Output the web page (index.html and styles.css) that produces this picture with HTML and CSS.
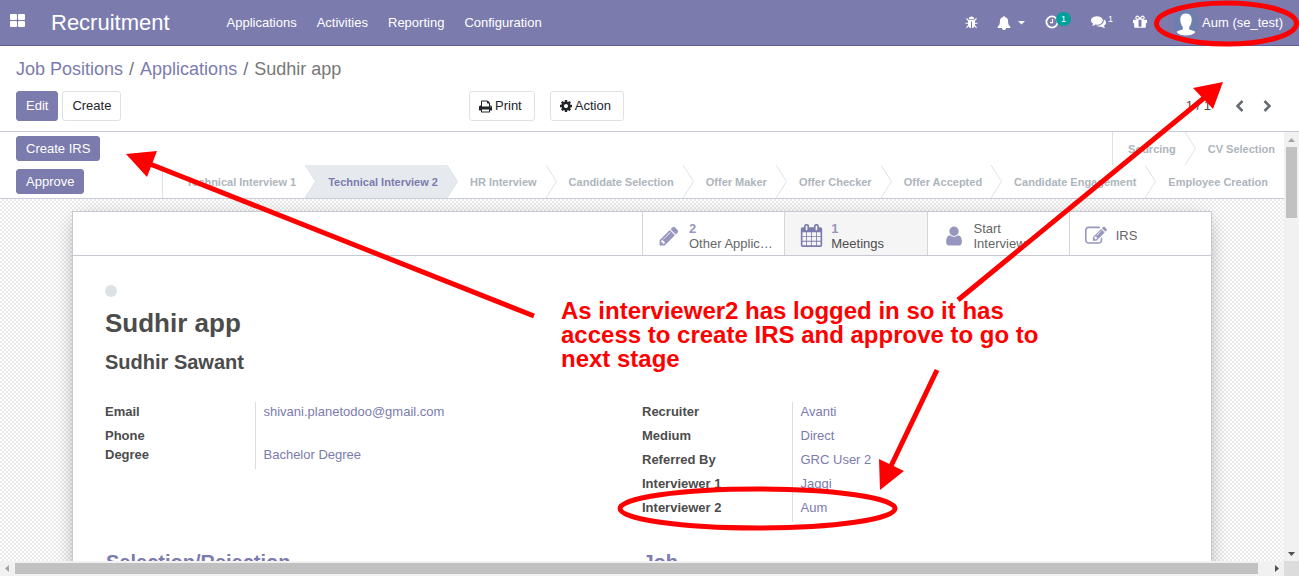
FILE: index.html
```html
<!DOCTYPE html>
<html lang="en">
<head>
<meta charset="utf-8">
<title>Sudhir app - Recruitment</title>
<link rel="stylesheet" href="styles.css">
</head>
<body>
<header class="navbar">
  <button class="apps" aria-label="Apps"><svg width="15" height="13" viewBox="0 0 15 13" fill="#fff"><rect width="7" height="6" rx="1"/><rect x="8" width="7" height="6" rx="1"/><rect y="7" width="7" height="6" rx="1"/><rect x="8" y="7" width="7" height="6" rx="1"/></svg></button>
  <a class="brand" href="#">Recruitment</a>
  <nav class="menu"><a href="#">Applications</a><a href="#">Activities</a><a href="#">Reporting</a><a href="#">Configuration</a></nav>
  <div class="systray">
    <button class="tray bug" aria-label="Debug"><svg width="13" height="13" viewBox="0 0 13 13"><path d="M3.8 3.2a2.7 2.7 0 0 1 5.4 0z" fill="#fff"/><path d="M3 4h7v5a3.5 3.2 0 0 1-3 3V5.500H6V12A3.500 3.200 0 0 1 3 9z" fill="#fff"/><path d="M1.500 2.500 3.500 4.500M11.500 2.500 9.500 4.500M.500 7.200H3M10 7.200h2.500M3.300 9.500 1.500 11.800M9.700 9.500l1.800 2.300" stroke="#fff" stroke-width="1.100"/></svg></button>
    <button class="tray bell" aria-label="Notifications"><svg width="14" height="14" viewBox="0 0 1792 1792" fill="#fff"><path d="M1728 1408q0 52-38 90t-90 38h-448q0 106-75 181t-181 75-181-75-75-181h-448q-52 0-90-38t-38-90q50-42 91-88t85-119.500 74.500-158.500 50-206 19.500-260q0-152 117-282.500t307-158.500q-8-19-8-39 0-40 28-68t68-28 68 28 28 68q0 20-8 39 190 28 307 158.500t117 282.500q0 139 19.500 260t50 206 74.500 158.500 85 119.500 91 88z"/></svg><svg width="7" height="4" viewBox="0 0 7 4" fill="#fff"><path d="M0 0h7L3.500 3.500z"/></svg></button>
    <button class="tray clock" aria-label="Activities"><svg width="14" height="14" viewBox="0 0 14 14" fill="none" stroke="#fff"><circle cx="7" cy="7" r="5.600" stroke-width="1.800"/><path d="M7.500 4v3.600H5" stroke-width="1.200"/></svg><span class="badge">1</span></button>
    <button class="tray chat" aria-label="Messages"><svg width="15" height="15" viewBox="0 0 1792 1792" fill="#fff"><path d="M1408 768q0 139-94 257t-256.500 186.500-353.500 68.500q-86 0-176-16-124 88-278 128-36 9-86 16h-3q-11 0-20.500-8t-11.500-21q-1-3-1-6.500t.5-6.500 2-6l2.500-5 3.500-5.500 4-5 4.500-5 4-4.500q5-6 23-25t26-29.500 22.500-29 25-38.500 20.500-44q-124-72-195-177t-71-224q0-139 94-257t256.500-186.500 353.500-68.500 353.500 68.500 256.500 186.500 94 257zm384 256q0 120-71 224.500t-195 176.500q10 24 20.500 44t25 38.500 22.500 29 26 29.500 23 25q1 1 4 4.500t4.500 5 4 5 3.500 5.500l2.500 5 2 6 .5 6.500-1 6.500q-3 14-13 22t-22 7q-50-7-86-16-154-40-278-128-90 16-176 16-271 0-472-132 58 4 88 4 161 0 309-45t264-129q125-92 192-212t67-254q0-77-23-152 129 71 204 178t75 230z"/></svg><span class="count">1</span></button>
    <button class="tray gift" aria-label="Rewards"><svg width="14" height="14" viewBox="128 128 1536 1536" fill="#fff"><path d="M1056 1356v-716h-320v716q0 25 18 38.500t46 13.500h192q28 0 46-13.500t18-38.500zm-456-844h195l-126-161q-26-31-69-31-40 0-68 28t-28 68 28 68 68 28zm688-96q0-40-28-68t-68-28q-43 0-69 31l-125 161h194q40 0 68-28t28-68zm376 256v320q0 14-9 23t-23 9h-96v416q0 40-28 68t-68 28h-1088q-40 0-68-28t-28-68v-416h-96q-14 0-23-9t-9-23v-320q0-14 9-23t23-9h440q-93 0-158.500-65.500t-65.500-158.500 65.500-158.500 158.500-65.500q107 0 168 77l128 165 128-165q61-77 168-77 93 0 158.500 65.500t65.500 158.500-65.500 158.500-158.500 65.500h440q14 0 23 9t9 23z"/></svg></button>
    <button class="tray user"><svg width="26" height="26" viewBox="0 0 26 26"><defs><clipPath id="face"><circle cx="13" cy="13" r="13"/></clipPath></defs><g clip-path="url(#face)"><rect width="26" height="26" fill="#6c7fae"/><path d="M13 3.500c4 0 6 2.800 5.700 6.800-.2 3.500-1.600 5.500-2.500 6.700v2.400c2 .8 5.500 1.200 6.300 2.600.6 2-5 3.500-9.500 3.500s-10.100-1.500-9.500-3.500c.8-1.400 4.300-1.800 6.300-2.600V17c-.9-1.200-2.300-3.200-2.500-6.700C7 6.300 9 3.500 13 3.500z" fill="#fff"/></g></svg><span>Aum (se_test)</span></button>
  </div>
</header>

<section class="control">
  <ol class="crumbs"><li><a href="#">Job Positions</a></li><li><a href="#">Applications</a></li><li>Sudhir app</li></ol>
  <div class="toolbar">
    <div class="tools"><button class="btn primary">Edit</button><button class="btn">Create</button></div>
    <div class="tools center"><button class="btn"><svg width="13" height="13" viewBox="64 64 1664 1664" fill="#212529"><path d="M448 1536h896v-256h-896v256zm0-640h896v-384h-160q-40 0-68-28t-28-68v-160h-640v640zm1152 64q0-26-19-45t-45-19-45 19-19 45 19 45 45 19 45-19 19-45zm128 0v416q0 13-9.500 22.500t-22.500 9.500h-224v160q0 40-28 68t-68 28h-960q-40 0-68-28t-28-68v-160h-224q-13 0-22.500-9.500t-9.500-22.500v-416q0-79 56.500-135.500t135.500-56.500h64v-544q0-40 28-68t68-28h672q40 0 88 20t76 48l152 152q28 28 48 76t20 88v256h64q79 0 135.500 56.500t56.500 135.500z"/></svg>Print</button><button class="btn"><svg width="12" height="12" viewBox="128 128 1536 1536" fill="#212529"><path d="M1152 896q0-106-75-181t-181-75-181 75-75 181 75 181 181 75 181-75 75-181zm512-109v222q0 12-8 23t-20 13l-185 28q-19 54-39 91 35 50 107 138 10 12 10 25t-9 23q-27 37-99 108t-94 71q-12 0-26-9l-138-108q-44 23-91 38-16 136-29 186-7 28-36 28h-222q-14 0-24.500-8.500t-11.500-21.500l-28-184q-49-16-90-37l-141 107q-10 9-25 9-14 0-25-11-126-114-165-168-7-10-7-23 0-12 8-23 15-21 51-66.500t54-70.500q-27-50-41-99l-183-27q-13-2-21-12.500t-8-23.500v-222q0-12 8-23t19-13l186-28q14-46 39-92-40-57-107-138-10-12-10-24 0-10 9-23 26-36 98.500-107.500t94.500-71.500q13 0 26 10l138 107q44-23 91-38 16-136 29-186 7-28 36-28h222q14 0 24.500 8.500t11.500 21.500l28 184q49 16 90 37l142-107q9-9 24-9 13 0 25 10 129 119 165 170 7 8 7 22 0 12-8 23-15 21-51 66.500t-54 70.500q26 50 41 98l183 28q13 2 21 12.500t8 23.500z"/></svg>Action</button></div>
    <div class="pager"><span>1 / 1</span><button aria-label="Previous"><svg width="9" height="12" viewBox="0 0 9 12"><path d="M7.500 1 2.500 6l5 5" fill="none" stroke="#666b72" stroke-width="2.500"/></svg></button><button aria-label="Next"><svg width="9" height="12" viewBox="0 0 9 12"><path d="m1.500 1 5 5-5 5" fill="none" stroke="#666b72" stroke-width="2.500"/></svg></button></div>
  </div>
</section>

<main class="viewport">
  <div class="view">
    <div class="statusbar">
      <div class="actions"><button class="btn primary small">Create IRS</button><button class="btn primary small">Approve</button></div>
      <div class="stages">
        <div class="stage-row first"><button class="stage">Sourcing<svg class="tip" viewBox="0 0 11 33"><path d="M0 0 10.500 16.500 0 33"/></svg></button><button class="stage">CV Selection</button></div>
        <div class="stage-row second"><button class="stage">Technical Interview 1<svg class="tip" viewBox="0 0 11 33"><path d="M0 0 10.500 16.500 0 33"/></svg></button><button class="stage current" aria-current="step">Technical Interview 2<svg class="tip" viewBox="0 0 11 33"><path d="M0 0 10.500 16.500 0 33"/></svg></button><button class="stage">HR Interview<svg class="tip" viewBox="0 0 11 33"><path d="M0 0 10.500 16.500 0 33"/></svg></button><button class="stage">Candidate Selection<svg class="tip" viewBox="0 0 11 33"><path d="M0 0 10.500 16.500 0 33"/></svg></button><button class="stage">Offer Maker<svg class="tip" viewBox="0 0 11 33"><path d="M0 0 10.500 16.500 0 33"/></svg></button><button class="stage">Offer Checker<svg class="tip" viewBox="0 0 11 33"><path d="M0 0 10.500 16.500 0 33"/></svg></button><button class="stage">Offer Accepted<svg class="tip" viewBox="0 0 11 33"><path d="M0 0 10.500 16.500 0 33"/></svg></button><button class="stage">Candidate Engagement<svg class="tip" viewBox="0 0 11 33"><path d="M0 0 10.500 16.500 0 33"/></svg></button><button class="stage">Employee Creation</button></div>
      </div>
    </div>
    <div class="backdrop">
      <article class="sheet">
        <div class="stats">
          <button class="stat"><svg width="22" height="22" viewBox="0 0 1792 1792"><path d="M491 1536l91-91-235-235-91 91v107h128v128h107zm523-928q0-22-22-22-10 0-17 7l-542 542q-7 7-7 17 0 22 22 22 10 0 17-7l542-542q7-7 7-17zm-54-192l416 416-832 832h-416v-416zm683 96q0 53-37 90l-166 166-416-416 166-165q36-38 90-38 53 0 91 38l235 234q37 39 37 91z"/></svg><span class="stat-text"><b>2</b><span>Other Applications</span></span></button>
          <button class="stat hover"><svg width="23" height="23" viewBox="0 0 1792 1792"><path d="M192 1664h288v-288h-288v288zm352 0h320v-288h-320v288zm-352-352h288v-320h-288v320zm352 0h320v-320h-320v320zm-352-384h288v-288h-288v288zm736 736h320v-288h-320v288zm-384-736h320v-288h-320v288zm768 736h288v-288h-288v288zm-384-352h320v-320h-320v320zm-352-864v-288q0-13-9.500-22.500t-22.500-9.500h-64q-13 0-22.500 9.500t-9.500 22.500v288q0 13 9.500 22.500t22.500 9.500h64q13 0 22.500-9.500t9.500-22.500zm736 864h288v-320h-288v320zm-384-384h320v-288h-320v288zm384 0h288v-288h-288v288zm32-480v-288q0-13-9.500-22.500t-22.500-9.500h-64q-13 0-22.500 9.500t-9.500 22.500v288q0 13 9.500 22.500t22.500 9.500h64q13 0 22.500-9.500t9.500-22.500zm384-64v1280q0 52-38 90t-90 38h-1408q-52 0-90-38t-38-90v-1280q0-52 38-90t90-38h128v-96q0-66 47-113t113-47h64q66 0 113 47t47 113v96h384v-96q0-66 47-113t113-47h64q66 0 113 47t47 113v96h128q52 0 90 38t38 90z"/></svg><span class="stat-text"><b>1</b><span>Meetings</span></span></button>
          <button class="stat"><svg width="22" height="22" viewBox="0 0 1792 1792"><path d="M1536 1399q0 109-62.500 187t-150.500 78h-854q-88 0-150.500-78t-62.500-187q0-85 8.500-160.500t31.500-152 58.500-131 94-89 134.500-34.500q131 128 313 128t313-128q76 0 134.500 34.500t94 89 58.500 131 31.500 152 8.500 160.500zm-256-887q0 159-112.500 271.500t-271.500 112.500-271.500-112.500-112.500-271.500 112.500-271.500 271.500-112.500 271.500 112.500 112.500 271.500z"/></svg><span class="stat-text"><span>Start</span><span>Interview</span></span></button>
          <button class="stat"><svg width="22" height="22" viewBox="0 0 1792 1792"><path d="M888 1184l116-116-152-152-116 116v56h96v96h56zm440-720q-16-16-33 1l-350 350q-17 17-1 33t33-1l350-350q17-17 1-33zm80 594v190q0 119-84.500 203.500t-203.500 84.500h-832q-119 0-203.500-84.500t-84.500-203.500v-832q0-119 84.500-203.500t203.500-84.500h832q63 0 117 25 15 7 18 23 3 17-9 29l-49 49q-14 14-32 8-23-6-45-6h-832q-66 0-113 47t-47 113v832q0 66 47 113t113 47h832q66 0 113-47t47-113v-126q0-13 9-22l64-64q15-15 35-7t20 29zm-96-738l288 288-672 672h-288v-288zm444 132l-92 92-288-288 92-92q28-28 68-28t68 28l152 152q28 28 28 68t-28 68z"/></svg><span class="stat-text"><span>IRS</span></span></button>
        </div>
        <div class="body">
          <button class="kanban-state" aria-label="In progress"></button>
          <h1>Sudhir app</h1>
          <h2>Sudhir Sawant</h2>
          <div class="groups">
            <table class="group"><tr><th scope="row">Email</th><td><a href="#">shivani.planetodoo@gmail.com</a></td></tr><tr class="empty"><th scope="row">Phone</th><td></td></tr><tr><th scope="row">Degree</th><td><a href="#">Bachelor Degree</a></td></tr></table>
            <table class="group"><tr><th scope="row">Recruiter</th><td><a href="#">Avanti</a></td></tr><tr><th scope="row">Medium</th><td><a href="#">Direct</a></td></tr><tr><th scope="row">Referred By</th><td><a href="#">GRC User 2</a></td></tr><tr><th scope="row">Interviewer 1</th><td><a href="#">Jaggi</a></td></tr><tr><th scope="row">Interviewer 2</th><td><a href="#">Aum</a></td></tr></table>
          </div>
          <div class="headings"><h3>Selection/Rejection</h3><h3>Job</h3></div>
        </div>
      </article>
    </div>
  </div>
  <div class="vscroll"><svg width="7" height="4" viewBox="0 0 7 4"><path d="M0 4h7L3.500 0z" fill="#a3a3a3"/></svg><i></i><svg width="7" height="4" viewBox="0 0 7 4"><path d="M0 0h7L3.500 4z" fill="#505050"/></svg></div>
</main>
<footer class="hscroll"><svg width="4" height="7" viewBox="0 0 4 7"><path d="M4 0v7L0 3.500z" fill="#a3a3a3"/></svg><i></i><svg width="4" height="7" viewBox="0 0 4 7"><path d="M0 0v7l4-3.500z" fill="#505050"/></svg><b></b></footer>

<svg class="marks" width="1299" height="576" viewBox="0 0 1299 576">
  <g fill="none" stroke="#f00" stroke-width="5"><ellipse cx="1226.500" cy="23.500" rx="70" ry="20.500"/><ellipse cx="757.500" cy="508.500" rx="137.500" ry="19.500"/><path d="M534 316 150 164M958 300 1204 98M937 370 891 466"/></g>
  <path fill="#f00" d="M126 154l31-3-10 26zM1223 82l-10 27-20-21zM880 490l-1-31 25 12z"/>
</svg>
<p class="note">As interviewer2 has logged in so it has<br>access to create IRS and approve to go to<br>next stage</p>
</body>
</html>
```
FILE: styles.css
```css
* { box-sizing: border-box; }
body { margin: 0; height: 100vh; display: flex; flex-direction: column; overflow: hidden; position: relative; background: #fff; color: #4c4c4c; font: 13px/20px "Liberation Sans", Arial, sans-serif; }
button { font: inherit; color: inherit; background: none; border: 0; padding: 0; cursor: pointer; }
a { color: #7c7bad; text-decoration: none; }
svg { display: block; flex: none; }

.navbar { flex: none; height: 46px; display: flex; align-items: center; background: #7c7bad; border-bottom: 1px solid #5f5e97; color: #fff; padding: 0 16px 0 10px; }
.navbar a { color: #fff; }
.apps { padding-bottom: 4px; }
.brand { font-size: 22px; margin-left: 26px; }
.menu { display: flex; gap: 20px; margin-left: 57px; }
.systray { margin-left: auto; display: flex; align-items: center; }
.tray { display: flex; align-items: center; }
.bug { margin-right: 19px; }
.bell { gap: 7px; margin-right: 20px; }
.clock { margin-right: 20px; padding-bottom: 2px; }
.badge { background: #00a09d; border-radius: 7px; font-size: 9px; line-height: 14px; width: 15px; margin: 0 0 6px -3px; }
.chat { margin-right: 20px; padding-bottom: 2px; }
.count { font-size: 9px; line-height: 14px; margin: 0 0 6px 2px; }
.gift { margin-right: 26px; padding-bottom: 2px; }
.user { gap: 3px; }

.control { flex: none; height: 86px; border-bottom: 1px solid #c8c8d3; padding: 11px 16px 0; }
.crumbs { list-style: none; display: flex; margin: 0; padding: 0; font-size: 18px; line-height: 24px; color: #777; }
.crumbs li + li::before { content: "/"; color: #6c757d; padding: 0 6px; }
.toolbar { display: grid; grid-template-columns: 453px 1fr auto; align-items: center; margin-top: 10px; }
.tools { display: flex; gap: 4px; }
.tools.center { gap: 15px; }
.btn { display: flex; align-items: center; gap: 3px; height: 30px; padding: 0 9px; border: 1px solid #dee2e6; border-radius: 3px; background: #fff; color: #212529; }
.center .btn { padding-right: 12px; }
.btn.primary { background: #7c7bad; border-color: #7c7bad; color: #fff; }
.btn.small { height: 25px; }
.pager { display: flex; align-items: center; padding-right: 11px; }
.pager span { margin-right: 24px; }
.pager button + button { margin-left: 19px; }

.viewport { flex: 1; min-height: 0; display: flex; }
.view { flex: 1; min-width: 0; overflow: hidden; display: flex; flex-direction: column; }
.statusbar { flex: none; display: flex; justify-content: space-between; border-bottom: 1px solid #c9ccd9; padding-left: 16px; }
.actions { display: flex; flex-direction: column; align-items: flex-start; gap: 8px; padding-top: 4px; }
.stages { display: flex; flex-direction: column; align-items: flex-end; }
.stage-row { display: flex; border-left: 1px solid #dee2e6; }
.second { padding-right: 7px; }
.stage { position: relative; height: 33px; padding: 0 9px 0 23px; font-size: 11px; font-weight: bold; color: #adb5bd; white-space: nowrap; }
.first .stage:first-child { padding-left: 15px; }
.stage.current { background: #e6e9ed; color: #7c7bad; }
.tip { position: absolute; left: 100%; top: 0; width: 11px; height: 33px; z-index: 1; fill: #fff; stroke: #dee2e6; }
.current .tip { fill: #e6e9ed; }

.backdrop { flex: 1; min-height: 0; padding: 12px 16px 0; background: repeating-conic-gradient(#ebebeb 0 25%, #fff 0 50%) 0 0 / 4px 4px; }
.sheet { max-width: 1140px; min-height: 500px; margin: 0 auto; background: #fff; border: 1px solid #c8c8d3; box-shadow: 0 5px 20px -5px rgba(0, 0, 0, .4); }
.stats { display: flex; padding-left: 50%; border-bottom: 1px solid #c8c8d3; }
.stat { flex: 1 1 0; min-width: 0; height: 43px; display: flex; align-items: center; gap: 9px; padding: 4px 10px 0 15px; border-left: 1px solid #d3d5dc; color: #666; text-align: left; line-height: 15px; }
.stat svg { fill: #9796bf; }
.stat b { color: #9796bf; }
.stat-text { display: flex; flex-direction: column; min-width: 0; }
.stat-text span { overflow: hidden; text-overflow: ellipsis; white-space: nowrap; }
.stat.hover { background: #f5f5f5; color: #4c4c4c; gap: 8px; }
.stat.hover svg { fill: #7c7bad; }
.body { padding: 29px 32px 0; }
.kanban-state { display: block; width: 12px; height: 12px; border-radius: 50%; background: #dee2e6; }
h1, h2, h3 { margin: 0; font-weight: bold; }
h1 { font-size: 26px; line-height: 32px; margin-top: 10px; }
h2 { font-size: 20px; line-height: 24px; margin-top: 11px; }
.groups { display: grid; grid-template-columns: 1fr 1fr; align-items: start; margin-top: 28px; }
.group { border-collapse: collapse; }
.group th { width: 150px; text-align: left; }
.group th, .group td { height: 24px; padding: 0; line-height: 19px; vertical-align: top; }
.group .empty > * { height: 19px; }
.group td { border-left: 1px solid #dcdcdc; padding-left: 8px; }
.headings { display: grid; grid-template-columns: 1fr 1fr; margin-top: 28px; padding-left: 1px; color: #7c7bad; }
h3 { font-size: 20px; line-height: 24px; }

.vscroll { flex: none; width: 15px; background: #f1f1f1; display: flex; flex-direction: column; align-items: center; padding: 6px 0 5px; }
.vscroll i { width: 11px; height: 71px; margin: 5px 0 auto; background: #c1c1c1; }
.hscroll { flex: none; height: 15px; background: #f1f1f1; display: flex; align-items: center; padding-left: 5px; }
.hscroll i { flex: 1; height: 11px; margin: 0 17px 0 6px; background: #c1c1c1; }
.hscroll b { width: 15px; height: 15px; margin-left: 5px; background: #dcdcdc; }

.marks { position: absolute; left: 0; top: 0; z-index: 2; pointer-events: none; }
.note { position: absolute; left: 561px; top: 299px; z-index: 3; margin: 0; font-size: 24px; line-height: 24px; font-weight: bold; color: #f00; white-space: nowrap; }
```
